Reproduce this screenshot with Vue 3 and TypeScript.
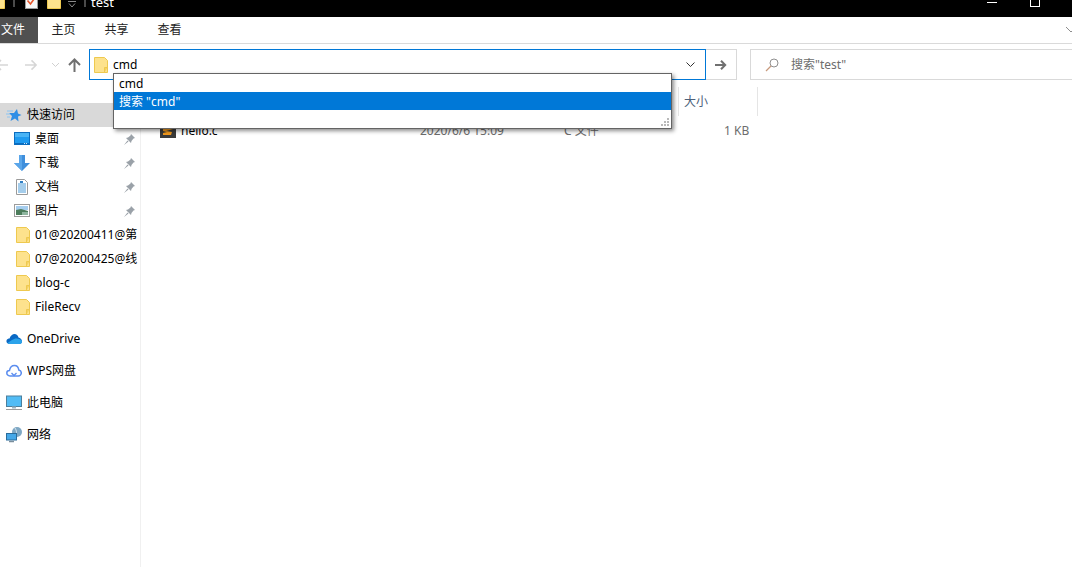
<template>
  <div class="explorer">
    <div class="titlebar">
      <div class="quick-icons">
        <svg class="folder-sm cut" viewBox="0 0 14 16"><path d="M.5.5h10l3 3v12H.5z" fill="#fde28d" stroke="#eec94f" /></svg>
        <span class="qsep first"></span>
        <svg class="check" viewBox="0 0 13 14"><rect x=".5" y=".5" width="12" height="13" fill="#f7f7f7" stroke="#9a9a9a" /><path d="M2.500 5.500l3 3.500 5-7" fill="none" stroke="#e8562c" stroke-width="1.600" /></svg>
        <svg class="folder-sm" viewBox="0 0 14 16"><path d="M.5.5h10l3 3v12H.5z" fill="#fde28d" stroke="#eec94f" /></svg>
        <svg class="qdown" viewBox="0 0 8 7"><path d="M0 .5h8M1 2.500l3 3.500 3-3.500" fill="none" stroke="#8a8a8a" /></svg>
        <span class="qsep"></span>
        <span class="title">test</span>
      </div>
      <div class="win-btns">
        <span class="win-min"></span>
        <span class="win-max"></span>
      </div>
    </div>

    <div class="ribbon">
      <div class="tab file-tab">文件</div>
      <div v-for="t in tabs" :key="t" class="tab">{{ t }}</div>
      <svg class="ribbon-chevron" viewBox="0 0 10 6"><path d="M0 0l5 5 5-5" fill="none" stroke="#8d8d8d" /></svg>
    </div>

    <div class="navbar">
      <div class="nav-btns">
        <svg class="nav-back" viewBox="0 0 14 12"><path d="M14 6H2M7 1L2 6l5 5" fill="none" stroke="#d6d6d6" stroke-width="1.600" /></svg>
        <svg class="nav-fwd" viewBox="0 0 14 12"><path d="M0 6h12M7 1l5 5-5 5" fill="none" stroke="#d6d6d6" stroke-width="1.600" /></svg>
        <svg class="nav-down" viewBox="0 0 7 4"><path d="M0 0l3.500 3.500L7 0" fill="none" stroke="#d0d0d0" /></svg>
        <svg class="nav-up" viewBox="0 0 13 14"><path d="M6.500 14V2M1 7l5.500-5.500L12 7" fill="none" stroke="#707070" stroke-width="2" /></svg>
      </div>
      <div class="address">
        <svg class="addr-folder" viewBox="0 0 14 16"><path d="M.5.5h10l3 3v12H.5z" fill="#fde28d" stroke="#eec94f" /><path d="M10.500 15.500v-5h3" fill="#f4d163" stroke="#eec94f" /></svg>
        <span class="addr-text">cmd</span>
        <svg class="addr-chevron" viewBox="0 0 9 5"><path d="M.5.5l4 4 4-4" fill="none" stroke="#333" /></svg>
      </div>
      <div class="go-btn">
        <svg viewBox="0 0 12 10"><path d="M0 5h10M6 .8L10.200 5 6 9.200" fill="none" stroke="#707070" stroke-width="2" /></svg>
      </div>
      <div class="search">
        <svg viewBox="0 0 14 14"><circle cx="9" cy="5" r="4" fill="none" stroke="#8f8f8f" /><path d="M6 8l-5 5" stroke="#c89a7d" stroke-width="1.300" /></svg>
        <span class="search-text">搜索"test"</span>
      </div>
    </div>

    <div class="main">
      <aside class="sidebar">
        <div class="side-inner">
          <div
            v-for="item in sideItems"
            :key="item.label"
            :class="['side-row', { active: item.active, top: item.top, gap: item.gap }]"
          >
            <svg v-if="item.icon === 'star'" class="ico" viewBox="0 0 16 16"><path d="M11 2l1 4.500 3.500 1.500-3.500 1.500.5 5-3.500-3-4.500 2.500 1.500-5L3 6h5z" fill="#2f8fe6" /><path d="M1 4h6M0 7h4M1 10h3" stroke="#8cc4f2" /></svg>
            <svg v-else-if="item.icon === 'desktop'" class="ico" viewBox="0 0 16 14"><rect x=".5" y=".5" width="15" height="12" fill="#1f9bf0" stroke="#0b6dbf" /><rect x="1" y="1" width="14" height="4" fill="#49b4f6" /><path d="M1 11.500h14" stroke="#0b6dbf" /><path d="M10 11.500h1M12 11.500h1" stroke="#cfe8fa" /></svg>
            <svg v-else-if="item.icon === 'down'" class="ico" viewBox="0 0 16 16"><path d="M5 0h6v8h5l-8 8-8-8h5z" fill="#3f8fdc" /><path d="M5 0h3v16l-8-8h5z" fill="#5aa6ea" /></svg>
            <svg v-else-if="item.icon === 'doc'" class="ico" viewBox="0 0 16 16"><path d="M2.500.5h8l3 3v12h-11z" fill="#fff" stroke="#9a9a9a" /><path d="M4 5h8M4 7h8M4 9h8M4 11h8M4 13h8" stroke="#4a9bd8" /><path d="M6 2h3v2H6z" fill="#2f7fc4" /></svg>
            <svg v-else-if="item.icon === 'pic'" class="ico" viewBox="0 0 16 14"><rect x=".5" y=".5" width="15" height="12" fill="#fff" stroke="#9c9c9c" /><rect x="2" y="2" width="12" height="4" fill="#a5cdee" /><path d="M2 6l5-1 7 2v4H2z" fill="#4d7d5c" /><path d="M8 8h6v3H8z" fill="#8fb6a0" /></svg>
            <svg v-else-if="item.icon === 'folder'" class="ico folder" viewBox="0 0 14 16"><path d="M.5.5h10l3 3v12H.5z" fill="#fde28d" stroke="#eec94f" /><path d="M10.500 15.500v-5h3" fill="#f4d163" stroke="#eec94f" /></svg>
            <svg v-else-if="item.icon === 'onedrive'" class="ico" viewBox="0 0 16 11"><path d="M4 10.500C1.500 10.500 0 9 .5 7c.4-1.500 2-2 3-2C4.500 2 6.500.5 8.500.5 10.500.5 12 2 12.500 4 14.500 4.500 16 6 16 8c0 1.500-1 2.500-2.500 2.500z" fill="#0a69c4" /><path d="M6 6.500c2-1.500 5-2 7-1 2 .5 3 1.500 3 2.500 0 1.500-1 2.500-2.500 2.500H4c-1 0-2-.5-2.500-1z" fill="#2ba3ea" /></svg>
            <svg v-else-if="item.icon === 'wps'" class="ico" viewBox="0 0 16 13"><path d="M4 11.500C2 11.500.8 10 .8 8.500S2 6 3.500 6C4 3 6 1 8.500 1c2.500 0 4 2 4.300 4.500 1.500.2 2.500 1.500 2.500 3s-1.300 3-3 3z" fill="none" stroke="#5b8def" stroke-width="1.500" /><path d="M5.500 8.500L8 11l2.500-2.500" fill="none" stroke="#5b8def" stroke-width="1.300" /></svg>
            <svg v-else-if="item.icon === 'pc'" class="ico" viewBox="0 0 16 15"><rect x=".5" y=".5" width="15" height="10.500" fill="#52bcf5" stroke="#4c7f9c" /><path d="M6 11h4v2H6z" fill="#9bb3c1" /><path d="M0 13.500h16v1H0z" fill="#9c9c9c" /></svg>
            <svg v-else class="ico" viewBox="0 0 16 16"><circle cx="11" cy="5" r="5" fill="#7fa8c4" /><path d="M9 1c2 3 2 6 0 9" fill="none" stroke="#d7e7f1" /><rect x=".5" y="6.500" width="10" height="6.500" fill="#45a8e8" stroke="#2a6d9c" /><path d="M3 14.500h5" stroke="#7a8e9c" stroke-width="1.500" /></svg>
            <span class="side-label">{{ item.label }}</span>
            <svg v-if="item.pinned" class="pin" viewBox="0 0 11 11"><path d="M7 0l4 4-1.500.5L7.500 7 7 9 2 4l2-.5L6.500 1.500zM3.500 6.500L0 11l4.500-3.500z" fill="#9aa1a8" /></svg>
          </div>
        </div>
      </aside>

      <section class="content">
        <div class="col-head">
          <span class="col-sep"></span>
          <span class="col-size">大小</span>
          <span class="col-sep"></span>
        </div>
        <div class="file-row">
          <svg class="file-ico" viewBox="0 0 16 14"><rect width="16" height="14" fill="#3b3b3b" /><path d="M3 4l10-1v2l-7 2 6 1-1 3H3V9l4-1-4-1z" fill="#f39a1d" /></svg>
          <span class="file-name">hello.c</span>
          <span class="file-date">2020/6/6 15:09</span>
          <span class="file-type">C 文件</span>
          <span class="file-size">1 KB</span>
        </div>
      </section>
    </div>

    <div class="suggest">
      <div class="suggest-row">cmd</div>
      <div class="suggest-row selected">搜索 "cmd"</div>
      <svg class="grip" viewBox="0 0 8 8"><path d="M6 0h2v2H6zM3 3h2v2H3zM6 3h2v2H6zM0 6h2v2H0zM3 6h2v2H3zM6 6h2v2H6z" fill="#b9b9b9" /></svg>
    </div>
  </div>
</template>

<script setup lang="ts">
interface SideItem {
  label: string;
  icon: string;
  pinned?: boolean;
  active?: boolean;
  top?: boolean;
  gap?: boolean;
}

const tabs = ["主页", "共享", "查看"];

const sideItems: SideItem[] = [
  { label: "快速访问", icon: "star", active: true, top: true },
  { label: "桌面", icon: "desktop", pinned: true },
  { label: "下载", icon: "down", pinned: true },
  { label: "文档", icon: "doc", pinned: true },
  { label: "图片", icon: "pic", pinned: true },
  { label: "01@20200411@第", icon: "folder" },
  { label: "07@20200425@线", icon: "folder" },
  { label: "blog-c", icon: "folder" },
  { label: "FileRecv", icon: "folder" },
  { label: "OneDrive", icon: "onedrive", top: true, gap: true },
  { label: "WPS网盘", icon: "wps", top: true, gap: true },
  { label: "此电脑", icon: "pc", top: true, gap: true },
  { label: "网络", icon: "net", top: true, gap: true },
];
</script>

<style>
html,
body {
  margin: 0;
  background: #fff;
  overflow: hidden;
}
</style>

<style scoped>
.explorer {
  position: relative;
  width: 1072px;
  height: 567px;
  overflow: hidden;
  background: #fff;
  color: #000;
  font-family: "Noto Sans", "Noto Sans CJK SC", sans-serif;
  font-size: 12px;
  display: flex;
  flex-direction: column;
}

.titlebar {
  height: 17px;
  flex: none;
  background: #000;
  display: flex;
  justify-content: space-between;
  overflow: hidden;
}

.quick-icons {
  display: flex;
  align-items: flex-end;
  height: 9px;
}

.folder-sm {
  width: 14px;
  height: 16px;
  margin-left: 9px;
  flex: none;
}

.folder-sm.cut {
  margin-left: -9px;
}

.qsep {
  width: 2px;
  height: 12px;
  margin-bottom: 2px;
  background: #4a4a4a;
  margin-left: 8px;
  flex: none;
}

.qsep.first {
  margin-left: 8px;
}

.check {
  width: 13px;
  height: 14px;
  margin-left: 10px;
  flex: none;
}

.qdown {
  width: 8px;
  height: 7px;
  margin-left: 7px;
  margin-bottom: 1px;
  flex: none;
}

.title {
  color: #fff;
  margin-left: 5px;
  line-height: 14px;
  font-size: 13px;
}

.win-btns {
  display: flex;
  align-items: flex-start;
  gap: 33px;
  margin-right: 32px;
}

.win-min {
  width: 10px;
  height: 1px;
  margin-top: 2px;
  background: #fff;
}

.win-max {
  width: 8px;
  height: 6px;
  margin-top: -1px;
  border: 1px solid #fff;
}

.ribbon {
  height: 26px;
  flex: none;
  display: flex;
  align-items: center;
  border-bottom: 1px solid #dadada;
  color: #222;
}

.tab {
  width: 53px;
  margin-right: 0;
  text-align: center;
  line-height: 24px;
  position: relative;
  left: -2px;
}

.file-tab {
  left: 0;
  width: 38px;
  margin-right: 1px;
  line-height: 26px;
  background: #505050;
  color: #fff;
  text-indent: -12px;
  height: 26px;
}

.ribbon-chevron {
  width: 10px;
  height: 6px;
  margin-left: auto;
  margin-right: -4px;
  flex: none;
}

.navbar {
  height: 31px;
  flex: none;
  margin-top: 5px;
  display: flex;
  align-items: stretch;
}

.nav-btns {
  width: 89px;
  flex: none;
  display: flex;
  align-items: center;
}

.nav-back {
  width: 14px;
  height: 12px;
  margin-left: -6px;
}

.nav-fwd {
  width: 13px;
  height: 12px;
  margin-left: 17px;
}

.nav-down {
  width: 7px;
  height: 4px;
  margin-left: 14px;
}

.nav-up {
  width: 13px;
  height: 14px;
  margin-left: 9px;
}

.address {
  width: 617px;
  box-sizing: border-box;
  border: 1px solid #0078d7;
  display: flex;
  align-items: center;
  padding-left: 4px;
}

.addr-folder {
  width: 14px;
  height: 16px;
  flex: none;
}

.addr-text {
  margin-left: 5px;
}

.addr-chevron {
  width: 9px;
  height: 5px;
  margin-left: auto;
  margin-right: 10px;
}

.go-btn {
  width: 31px;
  box-sizing: border-box;
  border: 1px solid #d9d9d9;
  border-left: none;
  display: flex;
  align-items: center;
  justify-content: center;
}

.go-btn svg {
  width: 12px;
  height: 10px;
}

.search {
  flex: 1;
  margin-left: 13px;
  margin-right: -4px;
  border: 1px solid #d9d9d9;
  display: flex;
  align-items: center;
  padding-left: 14px;
  color: #6d6d6d;
}

.search svg {
  width: 14px;
  height: 14px;
  margin-right: 12px;
}

.search-text {
  margin-bottom: 2px;
}

.main {
  flex: 1;
  display: flex;
  min-height: 0;
}

.sidebar {
  width: 140px;
  flex: none;
  box-sizing: content-box;
  border-right: 1px solid #f0f0f0;
}

.side-inner {
  padding-top: 23px;
}

.side-row {
  height: 24px;
  display: flex;
  align-items: center;
  padding-left: 14px;
}

.side-row.top {
  padding-left: 6px;
}

.side-row.gap {
  margin-top: 8px;
}

.side-row.active {
  background: #d9d9d9;
  width: 140px;
  box-sizing: border-box;
}

.ico {
  width: 16px;
  height: 16px;
  flex: none;
}

.ico.folder {
  width: 14px;
  margin-left: 2px;
}

.side-label {
  margin-left: 5px;
  margin-bottom: 2px;
  white-space: nowrap;
  overflow: hidden;
  flex: 1;
  min-width: 0;
}

.pin {
  width: 11px;
  height: 11px;
  flex: none;
  margin-right: 5px;
  margin-left: 4px;
}

.content {
  flex: 1;
  min-width: 0;
}

.col-head {
  height: 29px;
  margin-top: 7px;
  display: flex;
  align-items: center;
  padding-left: 537px;
}

.col-sep {
  width: 1px;
  height: 29px;
  background: #e5e5e5;
}

.col-size {
  width: 78px;
  padding-left: 5px;
  padding-bottom: 2px;
  box-sizing: border-box;
  color: #4c607a;
}

.file-row {
  height: 24px;
  margin-top: 2px;
  display: flex;
  align-items: center;
  padding-left: 19px;
  color: #6d6d6d;
}

.file-ico {
  width: 16px;
  height: 14px;
  flex: none;
  position: relative;
  top: 1px;
}

.file-name {
  margin-left: 5px;
  width: 239px;
  color: #000;
  flex: none;
}

.file-date {
  width: 144px;
  flex: none;
}

.file-type {
  width: 160px;
  flex: none;
}

.file-size {
  white-space: nowrap;
}

.suggest {
  position: absolute;
  left: 113px;
  top: 73px;
  width: 559px;
  height: 56px;
  box-sizing: border-box;
  border: 1px solid #646464;
  background: #fff;
  box-shadow: 2px 2px 4px rgba(0, 0, 0, 0.45);
  font-size: 12px;
}

.suggest-row {
  height: 18px;
  line-height: 20px;
  padding-left: 5px;
}

.suggest-row.selected {
  background: #0078d7;
  color: #fff;
}

.grip {
  position: absolute;
  right: 2px;
  bottom: 2px;
  width: 8px;
  height: 8px;
}
</style>
